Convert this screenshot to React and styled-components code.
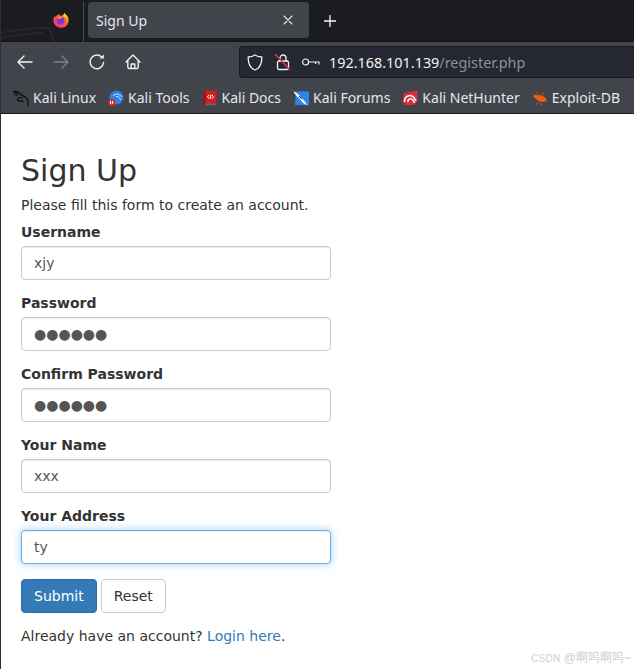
import styled, { createGlobalStyle } from "styled-components";

const GlobalStyle = createGlobalStyle`
  * { box-sizing: border-box; }
  html, body { margin: 0; background: #fff; }
  body { width: 634px; height: 669px; overflow: hidden; }
`;

function FirefoxLogo() {
  return (
    <svg width="16" height="16" viewBox="0 0 16 16">
      <defs>
        <linearGradient id="fx" x1="0.8" y1="0.1" x2="0.2" y2="0.9">
          <stop offset="0" stopColor="#ffb11f" />
          <stop offset="0.5" stopColor="#ff5a2b" />
          <stop offset="1" stopColor="#f5336e" />
        </linearGradient>
      </defs>
      <path d="M11.6 0.6 C11.6 2 12.6 2.6 13.6 3.6 C15.2 5.2 15.8 7 15.6 9 C15.2 13 12 15.8 8 15.8 C3.6 15.8 0.4 12.4 0.4 8.2 C0.4 6.6 0.8 5 1.6 3.8 C1.8 4.4 2 4.8 2.6 5 C3.6 3.2 5.4 2.2 7.2 2.2 C6.6 3 6.6 3.6 7 4 C9 4 11 3 11.6 0.6 Z" fill="url(#fx)" />
      <path d="M11.6 0.6 C11.6 2 12.6 2.6 13.6 3.6 C14.6 4.6 15.2 5.8 15.5 7 C14.4 5.6 13 5 11 4.4 C11.3 3 11.4 1.8 11.6 0.6 Z" fill="#ffd23a" />
      <circle cx="7.6" cy="8.6" r="3.9" fill="#7a35d6" />
      <path d="M4.4 6.6 C5.6 4.8 8.6 4.6 10 6.2 C8.6 5.8 7.8 6.4 7.6 7 C6.4 7 5.4 7 4.4 6.6 Z" fill="#ff9a2b" />
    </svg>
  );
}

function NavIcon({ children, dim }) {
  return (
    <svg width="18" height="18" viewBox="0 0 18 18" fill="none" stroke={dim ? "#7f8086" : "#f2f2f4"} strokeWidth="1.4" strokeLinecap="round" strokeLinejoin="round">
      {children}
    </svg>
  );
}

function DragonLogo() {
  return (
    <svg width="16" height="16" viewBox="0 0 16 16" fill="none" stroke="#0c0c0e" strokeWidth="1.2" strokeLinecap="round">
      <path d="M0.5 1.5 C3 1 6 2 8 4.5 C10 6.5 13 6.5 14.5 9 C15.5 11 15 13 15 15.5" />
      <path d="M1 3 L4 3.2 M2 5 L5 4.8 M9 7.5 C6 7.5 4 8.5 4.5 10 C5 11.5 8 10.5 10 11.5" />
    </svg>
  );
}

function ToolsLogo() {
  return (
    <svg width="16" height="16" viewBox="0 0 16 16">
      <circle cx="8.5" cy="7.5" r="7" fill="#2f80e4" />
      <path d="M5 6 C8 3 11 3.5 14 7 M8 6.5 C10 6 12 7.5 12.5 10" fill="none" stroke="#dcecff" strokeWidth="1" />
      <rect x="0.5" y="9" width="7" height="7" rx="3" fill="#e0262e" />
      <path d="M2.6 11 V14 M4.6 11 V14" stroke="#fff" strokeWidth="1" />
    </svg>
  );
}

function DocsLogo() {
  return (
    <svg width="16" height="16" viewBox="0 0 16 16">
      <rect x="1.5" y="0.5" width="13" height="15" rx="1" fill="#cf1f1f" />
      <rect x="1.5" y="0.5" width="2" height="15" fill="#8f1414" />
      <rect x="3" y="13.5" width="11.5" height="1.5" fill="#3f6fb5" />
      <path d="M7 5 L5.5 6.8 L7 8.5 M10 5 L11.5 6.8 L10 8.5 M9 4.5 L8 9" fill="none" stroke="#fff" strokeWidth="1" />
    </svg>
  );
}

function ForumsLogo() {
  return (
    <svg width="16" height="16" viewBox="0 0 16 16">
      <path d="M3 1.5 H16 V15 H2 Z" fill="#2a86ee" />
      <path d="M0.5 1 C3 2 5 4 7 6 L12 11.5 L14.5 15.5 L10 13 L6 8 C3.5 6.5 1.5 4 0.5 1 Z" fill="#f4f4f4" />
      <path d="M6 6 L9 9" stroke="#222" strokeWidth="1" />
    </svg>
  );
}

function NetHunterLogo() {
  return (
    <svg width="16" height="16" viewBox="0 0 16 16">
      <path d="M2 3 L15.5 0.5 L15.5 11 L12 15 L2 15 L0.5 11 Z" fill="#dd2b3a" />
      <path d="M2.5 12 C2.5 6 8 3.5 12 7.5 L14 11 M6 12 C5.5 9 9 7.5 11 10 L12.5 13" fill="none" stroke="#f4f4f4" strokeWidth="1.6" />
    </svg>
  );
}

function ExploitLogo() {
  return (
    <svg width="16" height="16" viewBox="0 0 16 16">
      <ellipse cx="9" cy="8.5" rx="5.5" ry="3.2" fill="#ee5a12" transform="rotate(18 9 8.5)" />
      <circle cx="3.5" cy="6.5" r="1.8" fill="#e8680f" />
      <path d="M0.5 4 L3.5 6.5 M6 12 L4 15 M9 12.5 L9 15.5 M6 5 L4.5 2 M10 5 L11 2.5 M13 10 L15.5 12" stroke="#d9600f" strokeWidth="0.8" fill="none" />
    </svg>
  );
}

const bookmarks = [
  { name: "Kali Linux", Logo: DragonLogo },
  { name: "Kali Tools", Logo: ToolsLogo },
  { name: "Kali Docs", Logo: DocsLogo },
  { name: "Kali Forums", Logo: ForumsLogo },
  { name: "Kali NetHunter", Logo: NetHunterLogo },
  { name: "Exploit-DB", Logo: ExploitLogo },
];

const fields = [
  { label: "Username", value: "xjy" },
  { label: "Password", value: "●●●●●●" },
  { label: "Confirm Password", value: "●●●●●●" },
  { label: "Your Name", value: "xxx" },
  { label: "Your Address", value: "ty", focused: true },
];

export default function App() {
  return (
    <Window>
      <GlobalStyle />
      <TabBar>
        <Backdrop width="170" height="42" viewBox="0 0 170 42" fill="none" stroke="#26262c" strokeWidth="2">
          <path d="M0 33 C15 29 35 28 49 28 L53 42" />
          <path d="M0 38 C20 34 32 33 42 33" />
        </Backdrop>
        <LogoSlot>
          <FirefoxLogo />
        </LogoSlot>
        <Tab>
          <TabTitle>Sign Up</TabTitle>
          <svg width="10" height="10" viewBox="0 0 10 10" stroke="#e6e6e8" strokeWidth="1.1" strokeLinecap="round">
            <path d="M1 1 L9 9 M9 1 L1 9" />
          </svg>
        </Tab>
        <NewTab>
          <svg width="12" height="12" viewBox="0 0 12 12" stroke="#f6f6f8" strokeWidth="1.3" strokeLinecap="round">
            <path d="M6 0.5 V11.5 M0.5 6 H11.5" />
          </svg>
        </NewTab>
      </TabBar>

      <NavBar>
        <NavButtons>
          <NavIcon>
            <path d="M16 9 H2 M8 3 L2 9 L8 15" />
          </NavIcon>
          <NavIcon dim>
            <path d="M2 9 H16 M10 3 L16 9 L10 15" />
          </NavIcon>
          <NavIcon>
            <path d="M15.6 9.5 A6.8 6.8 0 1 1 13.6 4" />
            <path d="M15.8 1.4 V5.6 H11.6 Z" fill="#f2f2f4" stroke="none" />
          </NavIcon>
          <NavIcon>
            <path d="M2 9 L9 2 L16 9 M3.8 7.5 V14 A1.5 1.5 0 0 0 5.3 15.5 H12.7 A1.5 1.5 0 0 0 14.2 14 V7.5 M7.2 15.5 V11 H10.8 V15.5" />
          </NavIcon>
        </NavButtons>
        <UrlBar>
          <svg width="16" height="17" viewBox="0 0 16 17" fill="none" stroke="#f2f2f4" strokeWidth="1.3" strokeLinejoin="round">
            <path d="M8 1 C10 2.4 12.5 3 14.8 3 C15 9 13 14 8 16 C3 14 1 9 1.2 3 C3.5 3 6 2.4 8 1 Z" />
          </svg>
          <LockSlot>
            <svg width="16" height="18" viewBox="0 0 16 18" fill="none" strokeLinecap="round">
              <rect x="2.5" y="8" width="11" height="8.5" rx="1.5" stroke="#f2f2f4" strokeWidth="1.3" />
              <path d="M5 8 V5 A3 3 0 0 1 11 5 V8" stroke="#f2f2f4" strokeWidth="1.3" />
              <path d="M0.5 1.5 L14.5 16.5" stroke="#f02c50" strokeWidth="1.4" />
            </svg>
          </LockSlot>
          <KeySlot>
            <svg width="18" height="10" viewBox="0 0 18 10" fill="none" stroke="#f2f2f4" strokeWidth="1.2">
              <circle cx="3.6" cy="5" r="3" />
              <path d="M6.6 5 H17 V7.5 M13.5 5 V7" />
            </svg>
          </KeySlot>
          <Url>
            192.168.101.139<UrlPath>/register.php</UrlPath>
          </Url>
        </UrlBar>
      </NavBar>

      <BookmarkBar>
        {bookmarks.map(({ name, Logo }) => (
          <Bookmark key={name}>
            <Logo />
            <span>{name}</span>
          </Bookmark>
        ))}
      </BookmarkBar>

      <Page>
        <Heading>Sign Up</Heading>
        <Paragraph>Please fill this form to create an account.</Paragraph>
        <form>
          {fields.map((f) => (
            <FormGroup key={f.label}>
              <Label>{f.label}</Label>
              <Input readOnly value={f.value} $focused={f.focused} />
            </FormGroup>
          ))}
          <Buttons>
            <SubmitButton type="button">Submit</SubmitButton>
            <ResetButton type="button">Reset</ResetButton>
          </Buttons>
        </form>
        <Paragraph>
          Already have an account? <LoginLink href="#">Login here</LoginLink>.
        </Paragraph>
      </Page>
      <Watermark>
        <WatermarkBrand>CSDN</WatermarkBrand> @啊呜啊呜~
      </Watermark>
    </Window>
  );
}

const Window = styled.div`
  position: relative;
  width: 634px;
  height: 669px;
  overflow: hidden;
  background: #fff;
  border-left: 1px solid #2b2d3a;
`;

const TabBar = styled.div`
  position: relative;
  height: 42px;
  display: flex;
  align-items: flex-start;
  padding-top: 2px;
  background: #1b1c21;
  border-bottom: 1px solid #131317;
`;

const Backdrop = styled.svg`
  position: absolute;
  left: 0;
  top: 0;
`;

const LogoSlot = styled.div`
  position: relative;
  width: 83px;
  height: 40px;
  padding: 10px 0 0 52px;
  border-right: 1px solid #4a4b52;
`;

const Tab = styled.div`
  position: relative;
  width: 221px;
  height: 36px;
  margin-left: 4px;
  padding: 0 16px 0 8px;
  display: flex;
  align-items: center;
  justify-content: space-between;
  background: #42444c;
  border-radius: 4px;
`;

const TabTitle = styled.span`
  font-family: "Noto Sans", sans-serif;
  font-size: 14px;
  color: #e6e6e8;
`;

const NewTab = styled.div`
  position: relative;
  margin: 13px 0 0 15px;
  line-height: 0;
`;

const NavBar = styled.div`
  height: 36px;
  display: flex;
  align-items: flex-start;
  padding-top: 4px;
  background: #42444c;
`;

const NavButtons = styled.div`
  width: 238px;
  height: 32px;
  padding-left: 15px;
  display: flex;
  align-items: center;
  gap: 18px;
`;

const UrlBar = styled.div`
  flex: 1;
  height: 32px;
  display: flex;
  align-items: center;
  padding-left: 7px;
  background: #252733;
  border: 1px solid #17181d;
  border-right: none;
  border-radius: 4px 0 0 4px;
`;

const LockSlot = styled.div`
  margin-left: 12px;
  line-height: 0;
`;

const KeySlot = styled.div`
  margin-left: 11px;
  line-height: 0;
`;

const Url = styled.span`
  margin-left: 9px;
  font-family: "Noto Sans", sans-serif;
  font-size: 14.4px;
  color: #f0f0f2;
`;

const UrlPath = styled.span`
  color: #8f9097;
`;

const BookmarkBar = styled.div`
  height: 36px;
  display: flex;
  align-items: center;
  gap: 12px;
  padding: 4px 0 0 12px;
  background: #42444c;
  border-bottom: 1px solid #17181d;
`;

const Bookmark = styled.div`
  display: flex;
  align-items: center;
  gap: 4px;
  font-family: "Noto Sans", sans-serif;
  font-size: 14px;
  color: #e6e6e8;
  white-space: nowrap;
`;

const Page = styled.div`
  width: 350px;
  padding: 20px;
  font-family: "DejaVu Sans", sans-serif;
  font-size: 14px;
  line-height: 17px;
  color: #333;
`;

const Heading = styled.h2`
  margin: 20px 0 10px;
  font-size: 30px;
  font-weight: 400;
  line-height: 33px;
`;

const Paragraph = styled.p`
  margin: 0 0 10px;
`;

const FormGroup = styled.div`
  margin-bottom: 15px;
`;

const Label = styled.label`
  display: block;
  margin-bottom: 5px;
  font-weight: 700;
`;

const Input = styled.input`
  display: block;
  width: 310px;
  height: 34px;
  padding: 6px 12px;
  font-family: "DejaVu Sans", sans-serif;
  font-size: 14px;
  color: #555;
  background: #fff;
  border: 1px solid ${(p) => (p.$focused ? "#66afe9" : "#ccc")};
  border-radius: 4px;
  outline: none;
  box-shadow: inset 0 1px 1px rgba(0, 0, 0, 0.075)
    ${(p) => (p.$focused ? ", 0 0 8px rgba(102, 175, 233, 0.6)" : "")};
`;

const Buttons = styled.div`
  display: flex;
  gap: 4px;
  margin-bottom: 15px;
`;

const SubmitButton = styled.button`
  height: 34px;
  padding: 6px 12px;
  font-family: "DejaVu Sans", sans-serif;
  font-size: 14px;
  color: #fff;
  background: #337ab7;
  border: 1px solid #2e6da4;
  border-radius: 4px;
`;

const ResetButton = styled(SubmitButton)`
  color: #333;
  background: #fff;
  border-color: #ccc;
`;

const LoginLink = styled.a`
  color: #337ab7;
  text-decoration: none;
`;

const Watermark = styled.div`
  position: absolute;
  right: 3px;
  bottom: 4px;
  font-family: "Liberation Sans", "Noto Sans CJK SC", sans-serif;
  font-size: 12px;
  color: #cfcfcf;
`;

const WatermarkBrand = styled.span`
  font-size: 10px;
  letter-spacing: 0.3px;
`;
